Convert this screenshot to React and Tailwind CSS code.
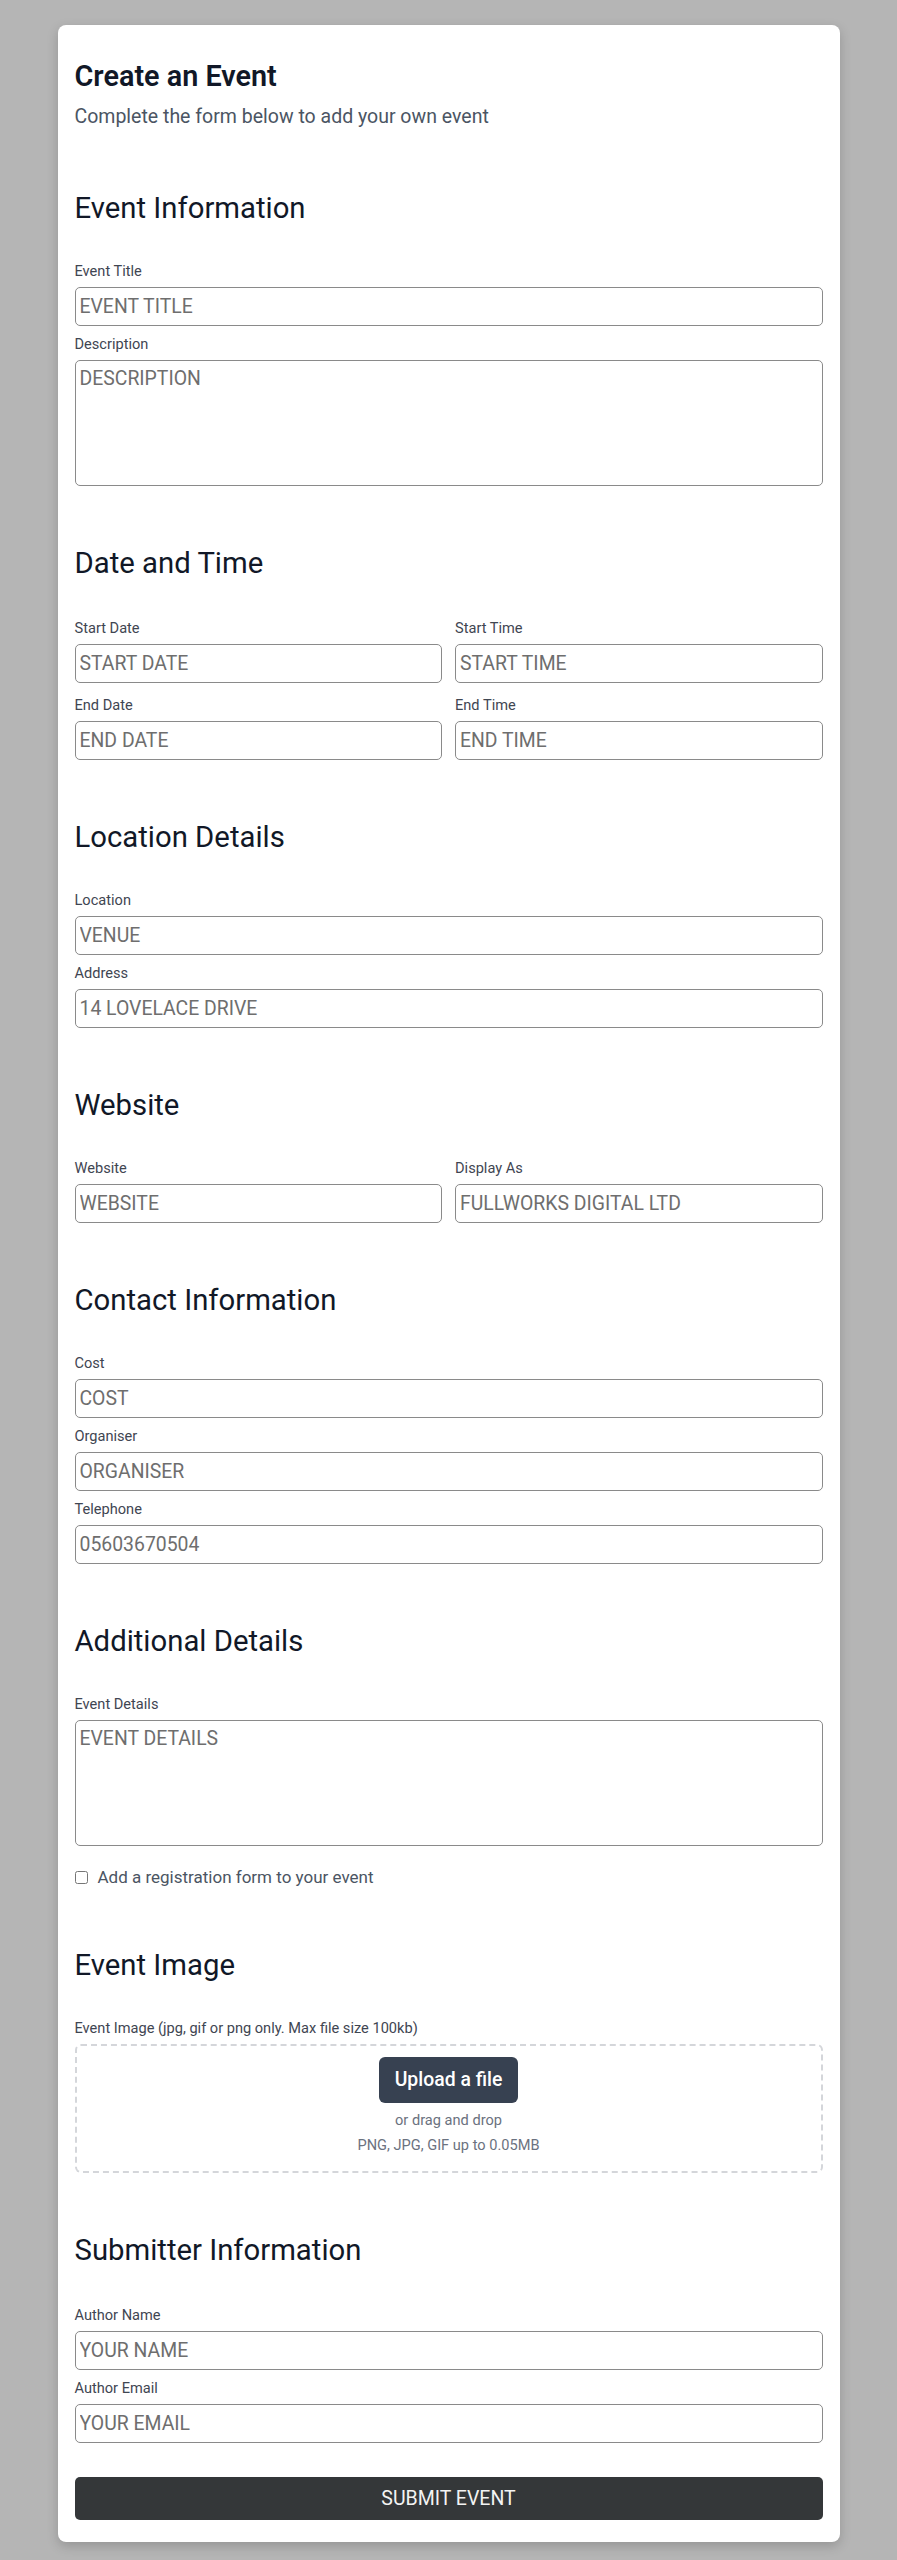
import React from "react";

const font = { fontFamily: "Roboto, 'Noto Sans', 'Liberation Sans', sans-serif" };

function Label({ children }) {
  return (
    <label className="block text-[14.6px] leading-[16px] text-[#3f4652]">{children}</label>
  );
}

function Input({ placeholder, className = "" }) {
  return (
    <input
      type="text"
      placeholder={placeholder}
      className={
        "mt-[8px] block h-[39px] w-full rounded-[5px] border border-[#8a8a8a] bg-white px-[4px] text-[19.4px] text-[#6e6e6e] placeholder:text-[#6e6e6e] outline-none " +
        className
      }
      style={font}
    />
  );
}

function Field({ label, placeholder, className = "" }) {
  return (
    <div className={className}>
      <Label>{label}</Label>
      <Input placeholder={placeholder} />
    </div>
  );
}

function TextArea({ label, placeholder, className = "" }) {
  return (
    <div className={className}>
      <Label>{label}</Label>
      <textarea
        placeholder={placeholder}
        className="mt-[8px] block h-[126px] w-full resize-none rounded-[5px] border border-[#8a8a8a] bg-white px-[4px] pt-[4px] text-[19.4px] leading-[28px] text-[#6e6e6e] placeholder:text-[#6e6e6e] outline-none"
        style={font}
      />
    </div>
  );
}

function Heading({ children, className = "mt-[59px]" }) {
  return (
    <h2 className={"text-[29.3px] leading-[36px] font-normal text-[#111827] " + className}>{children}</h2>
  );
}

export default function App() {
  return (
    <div className="min-h-screen bg-[#b5b5b5] pt-[25px] pb-[17px]" style={font}>
      <div className="mx-auto w-[782px] rounded-[8px] bg-white px-[17px] pt-[33px] pb-[22px] shadow-[0_4px_12px_rgba(0,0,0,0.18)]">
        <h1 className="text-[28.8px] leading-[36px] font-semibold text-[#111827]">Create an Event</h1>
        <p className="mt-[9px] text-[19.5px] leading-[28px] text-[#4b5563]">
          Complete the form below to add your own event
        </p>

        <Heading>Event Information</Heading>
        <div className="mt-[37px]">
          <Field label="Event Title" placeholder="EVENT TITLE" />
          <TextArea className="mt-[10px]" label="Description" placeholder="DESCRIPTION" />
        </div>

        <Heading>Date and Time</Heading>
        <div className="mt-[39px] grid grid-cols-2 gap-x-[13px] gap-y-[14px]">
          <Field label="Start Date" placeholder="START DATE" />
          <Field label="Start Time" placeholder="START TIME" />
          <Field label="End Date" placeholder="END DATE" />
          <Field label="End Time" placeholder="END TIME" />
        </div>

        <Heading>Location Details</Heading>
        <div className="mt-[37px]">
          <Field label="Location" placeholder="VENUE" />
          <Field className="mt-[10px]" label="Address" placeholder="14 LOVELACE DRIVE" />
        </div>

        <Heading>Website</Heading>
        <div className="mt-[37px] grid grid-cols-2 gap-x-[13px]">
          <Field label="Website" placeholder="WEBSITE" />
          <Field label="Display As" placeholder="FULLWORKS DIGITAL LTD" />
        </div>

        <Heading>Contact Information</Heading>
        <div className="mt-[37px]">
          <Field label="Cost" placeholder="COST" />
          <Field className="mt-[10px]" label="Organiser" placeholder="ORGANISER" />
          <Field className="mt-[10px]" label="Telephone" placeholder="05603670504" />
        </div>

        <Heading>Additional Details</Heading>
        <div className="mt-[37px]">
          <TextArea label="Event Details" placeholder="EVENT DETAILS" />
          <div className="mt-[19px] flex h-[24px] items-center">
            <input type="checkbox" className="m-0 h-[13px] w-[13px]" />
            <span className="ml-[10px] text-[17px] leading-[24px] text-[#4b5563]">
              Add a registration form to your event
            </span>
          </div>
        </div>

        <Heading className="mt-[58px]">Event Image</Heading>
        <div className="mt-[37px]">
          <Label>Event Image (jpg, gif or png only. Max file size 100kb)</Label>
          <div className="mt-[8px] flex h-[129px] flex-col items-center rounded-[6px] border-2 border-dashed border-[#d4d6da] pt-[11px]">
            <button
              type="button"
              className="h-[46px] rounded-[6px] bg-[#374151] px-[16px] text-[19.4px] font-medium text-white"
            >
              Upload a file
            </button>
            <p className="mt-[7px] text-[14.6px] leading-[20px] text-[#6b7280]">or drag and drop</p>
            <p className="mt-[5px] text-[14.6px] leading-[20px] text-[#6b7280]">PNG, JPG, GIF up to 0.05MB</p>
          </div>
        </div>

        <Heading>Submitter Information</Heading>
        <div className="mt-[39px]">
          <Field label="Author Name" placeholder="YOUR NAME" />
          <Field className="mt-[10px]" label="Author Email" placeholder="YOUR EMAIL" />
        </div>

        <button
          type="button"
          className="mt-[34px] block h-[43px] w-full rounded-[5px] bg-[#343739] text-[19.5px] text-[#f3f3f3]"
        >
          SUBMIT EVENT
        </button>
      </div>
    </div>
  );
}
